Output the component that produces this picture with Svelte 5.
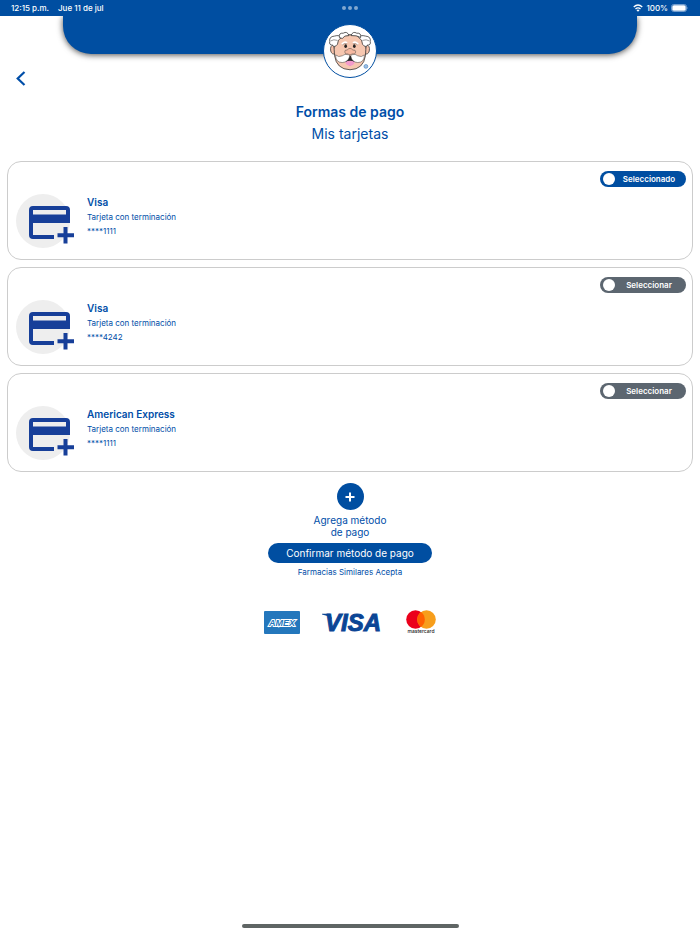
<script>
  let cards = [
    { id: 1, brand: 'Visa', ending: '1111' },
    { id: 2, brand: 'Visa', ending: '4242' },
    { id: 3, brand: 'American Express', ending: '1111' }
  ];

  let selectedCard = 1;

  function selectCard(id) {
    selectedCard = id;
  }
</script>

<div class="screen">
  <div class="status-bar">
    <div class="status-left">
      <span>12:15 p.m.</span>
      <span>Jue 11 de jul</span>
    </div>
    <div class="dots"><i></i><i></i><i></i></div>
    <div class="status-right">
      <svg width="10" height="8" viewBox="0 0 20 16" fill="none" stroke="#fff" stroke-width="2.8">
        <path d="M1.500 6 Q10 -2 18.500 6" />
        <path d="M5 10 Q10 5.500 15 10" />
        <path d="M10 15.500 L7 12.300 Q10 10 13 12.300 Z" fill="#fff" stroke="none" />
      </svg>
      <span>100%</span>
      <svg width="18" height="8" viewBox="0 0 18 8">
        <rect x="0.500" y="0.500" width="15" height="7" rx="2.200" fill="none" stroke="#8eb0d8" stroke-width="0.800" />
        <rect x="1.300" y="1.300" width="13.400" height="5.400" rx="1.500" fill="#fff" />
        <path d="M16.500 2.800 Q17.700 4 16.500 5.200 Z" fill="#8eb0d8" />
      </svg>
    </div>
  </div>

  <header>
    <div class="banner">
      <div class="logo">
        <svg viewBox="0 0 54 54" role="img" aria-label="Farmacias Similares">
          <g stroke="#333" stroke-width="0.800">
            <path d="M10 21 Q6 21 7 27 Q8 31 12 30 Z" fill="#f6c0a8" />
            <path d="M44 21 Q48 21 47 27 Q46 31 42 30 Z" fill="#f6c0a8" />
            <path d="M11 19 Q10 25 11 32 Q13 46 27 46.500 Q41 46 43 32 Q44 25 43 19 Q39 10 27 10 Q15 10 11 19 Z" fill="#f6c7b0" />
            <path d="M14 20 Q11 24 9 21 Q5 21 6 17 Q5 12 11 11.500 Q16 10 18 13 Q14 15 14 20 Z" fill="#fff" />
            <path d="M40 20 Q43 24 45 21 Q49 21 48 17 Q49 12 43 11.500 Q38 10 36 13 Q40 15 40 20 Z" fill="#fff" />
            <path d="M16 13 Q15 8 20 8.500 Q24 6 26 11 Q21 10.500 19 14 Z" fill="#fff" />
            <path d="M28 11 Q30 6 34 8.500 Q39 8 38 13 Q34 10.500 28 11 Z" fill="#fff" />
            <path d="M7 16.500 Q10 14.500 14 16 M40 16 Q44 14.500 47 16.500" fill="none" stroke-width="0.500" />
          </g>
          <path d="M18.500 20 Q21 16.500 24 18.500 M30 18.500 Q33 16.500 35.500 20" fill="none" stroke="#fff" stroke-width="1.600" />
          <path d="M19 20.800 Q21 18.500 24 19.500 M30 19.500 Q33 18.500 35 20.800" fill="none" stroke="#555" stroke-width="0.400" />
          <ellipse cx="22.500" cy="22" rx="1.400" ry="1.900" fill="#222" />
          <ellipse cx="31.500" cy="22" rx="1.400" ry="1.900" fill="#222" />
          <path d="M23 35 Q27 29 31 35 Q33 40 27 42 Q21 40 23 35 Z" fill="#222" />
          <path d="M22 38.500 Q27 36 32 38.500 Q31 42 27 42.500 Q23 42 22 38.500 Z" fill="#f39acb" />
          <path d="M26.500 31 Q21 29.500 19 32 Q15 34 12 31 Q12 39 19 39 Q25 38.500 26.500 33 Z" fill="#fff" stroke="#333" stroke-width="0.500" />
          <path d="M28 31 Q33 29.500 35 32 Q39 34 42 31 Q42 39 35 39 Q29 38.500 28 33 Z" fill="#fff" stroke="#333" stroke-width="0.500" />
          <path d="M21.500 28 Q21.500 25.500 24 26 Q27 22.500 30 26 Q33 25.500 33 28 Q32.500 31 29.500 30 Q27 32 24.500 30 Q22 31 21.500 28 Z" fill="#f6b8a0" stroke="#444" stroke-width="0.500" />
          <circle cx="43.500" cy="43" r="2" fill="#9fc0e2" stroke="#3d7cc0" stroke-width="0.600" />
        </svg>
      </div>
    </div>
  </header>

  <nav>
    <button class="back" aria-label="Regresar">
      <svg width="10" height="15" viewBox="0 0 10 15" fill="none" stroke="#004ea8" stroke-width="2.200">
        <path d="M8.500 1 L1.700 7.500 L8.500 14" />
      </svg>
    </button>
  </nav>

  <main>
    <h1>Formas de pago</h1>
    <h2>Mis tarjetas</h2>

    <ul class="cards">
      {#each cards as card (card.id)}
        <li class="card">
          <div class="card-icon">
            <svg width="46" height="39" viewBox="0 0 46 39">
              <path d="M4 0 H37 Q41 0 41 4 V17 H4 V29 H25 V33 H4 Q0 33 0 29 V4 Q0 0 4 0 Z M4 4 V8.500 H37 V4 Z" fill="#173f99" fill-rule="evenodd" />
              <path d="M36.500 21 V37.500 M28.500 29.300 H45" fill="none" stroke="#173f99" stroke-width="4" />
            </svg>
          </div>
          <div class="card-info">
            <h3>{card.brand}</h3>
            <p>Tarjeta con terminación</p>
            <p>****{card.ending}</p>
          </div>
          <button
            class="toggle"
            class:selected={selectedCard === card.id}
            aria-pressed={selectedCard === card.id}
            on:click={() => selectCard(card.id)}
          >
            <span class="knob"></span>
            <span class="toggle-text">{selectedCard === card.id ? 'Seleccionado' : 'Seleccionar'}</span>
          </button>
        </li>
      {/each}
    </ul>

    <button class="add">
      <span class="add-icon">
        <svg width="10" height="10" viewBox="0 0 10 10" stroke="#fff" stroke-width="2">
          <path d="M5 0.500 V9.500 M0.500 5 H9.500" />
        </svg>
      </span>
      <span>Agrega método<br />de pago</span>
    </button>

    <button class="confirm">Confirmar método de pago</button>
    <p class="accepts">Farmacias Similares Acepta</p>

    <div class="brands">
      <svg width="36" height="23" viewBox="0 0 36 23" role="img" aria-label="American Express">
        <rect width="36" height="23" rx="1" fill="#2477bc" />
        <text x="18" y="15" text-anchor="middle" class="amex">AMEX</text>
      </svg>
      <svg width="62" height="29" viewBox="0 -3 62 29" role="img" aria-label="Visa">
        <path d="M0 2.800 H8 L10 8 Q6 4.500 0 3.600 Z" fill="#0b4595" />
        <text x="3" y="20" class="visa">VISA</text>
      </svg>
      <svg width="30" height="25" viewBox="0 0 30 25" role="img" aria-label="Mastercard">
        <circle cx="9.500" cy="9.500" r="9.300" fill="#eb001b" />
        <circle cx="20.500" cy="9.500" r="9.300" fill="#f79e1b" />
        <path d="M15 2 A9.300 9.300 0 0 1 15 17 A9.300 9.300 0 0 1 15 2 Z" fill="#ff5f00" />
        <text x="15" y="23" text-anchor="middle" class="mastercard">mastercard</text>
      </svg>
    </div>
  </main>

  <div class="home-indicator"></div>
</div>

<style>
  :global(body) {
    background-color: #fff;
    font-family: Inter, "Liberation Sans", sans-serif;
    color: #004ea8;
  }

  .screen {
    min-height: 100vh;
    display: flex;
    flex-direction: column;
  }

  .status-bar {
    position: relative;
    z-index: 1;
    height: 16px;
    padding: 0 11px;
    display: grid;
    grid-template-columns: 1fr auto 1fr;
    align-items: center;
    background-color: #004ea1;
    color: #fff;
    font-size: 8px;
    font-weight: 500;
  }

  .status-left {
    display: flex;
    gap: 9px;
  }

  .status-right {
    display: flex;
    justify-content: flex-end;
    align-items: center;
    gap: 3px;
  }

  .dots {
    display: flex;
    gap: 2px;
  }

  .dots i {
    width: 4px;
    height: 4px;
    border-radius: 50%;
    background-color: #80a7d0;
  }

  header {
    padding: 0 9%;
  }

  .banner {
    position: relative;
    height: 38px;
    border-radius: 0 0 28px 28px;
    background-color: #004ea1;
    box-shadow: 0 1px 6px rgba(0, 0, 0, 0.7);
  }

  .logo {
    position: absolute;
    left: 50%;
    bottom: -24px;
    width: 54px;
    height: 54px;
    box-sizing: border-box;
    transform: translateX(-50%);
    border: 1px solid #004ea1;
    border-radius: 50%;
    background-color: #fff;
  }

  .logo svg {
    display: block;
  }

  button {
    padding: 0;
    border: none;
    background: none;
    color: inherit;
    font-family: inherit;
    cursor: pointer;
  }

  nav {
    display: flex;
    padding: 17px 16px 0;
  }

  .back svg {
    display: block;
  }

  main {
    display: flex;
    flex-direction: column;
    align-items: center;
    padding: 16px 7px 0;
  }

  h1, h2, h3, p {
    margin: 0;
  }

  h1 {
    font-size: 14px;
    font-weight: 600;
    line-height: 20px;
  }

  h2 {
    font-size: 14px;
    font-weight: 400;
    line-height: 24px;
  }

  .cards {
    align-self: stretch;
    display: flex;
    flex-direction: column;
    gap: 7px;
    margin: 15px 0 11px;
    padding: 0;
    list-style-type: none;
  }

  .card {
    display: flex;
    align-items: flex-start;
    min-height: 99px;
    box-sizing: border-box;
    padding: 9px 6px 0 8px;
    border: 1px solid #ccc;
    border-radius: 14px;
  }

  .card-icon {
    width: 54px;
    height: 54px;
    margin-top: 23px;
    border-radius: 50%;
    background-color: #eee;
  }

  .card-icon svg {
    display: block;
    margin: 12px 0 0 13px;
  }

  .card-info {
    flex: 1;
    padding: 23px 0 0 17px;
    font-size: 8px;
    line-height: 14px;
  }

  h3 {
    font-size: 10px;
    font-weight: 600;
    line-height: 16px;
  }

  .toggle {
    display: flex;
    align-items: center;
    width: 86px;
    height: 16px;
    padding: 0 3px;
    border-radius: 8px;
    background-color: #5c6670;
    color: #fff;
    font-size: 8px;
    font-weight: 600;
  }

  .toggle.selected {
    background-color: #004ea1;
  }

  .knob {
    width: 12px;
    height: 12px;
    border-radius: 50%;
    background-color: #fff;
  }

  .toggle-text {
    flex: 1;
  }

  .add {
    display: flex;
    flex-direction: column;
    align-items: center;
    gap: 4px;
    font-size: 10px;
    line-height: 12px;
  }

  .add-icon {
    display: flex;
    align-items: center;
    justify-content: center;
    width: 27px;
    height: 27px;
    border-radius: 50%;
    background-color: #004ea1;
  }

  .confirm {
    height: 20px;
    margin-top: 5px;
    padding: 0 18px;
    border-radius: 10px;
    background-color: #004ea1;
    color: #fff;
    font-size: 10px;
  }

  .accepts {
    margin-top: 2px;
    font-size: 8px;
    line-height: 14px;
  }

  .brands {
    display: flex;
    align-items: center;
    gap: 22px;
    margin-top: 29px;
  }

  .amex {
    font: italic bold 9px "Liberation Sans", sans-serif;
    fill: #2477bc;
    stroke: #fff;
    stroke-width: 2px;
    paint-order: stroke;
  }

  .visa {
    font: italic bold 24px "Liberation Sans", sans-serif;
    fill: #0b4595;
    stroke: #0b4595;
    stroke-width: 1px;
  }

  .mastercard {
    font: 500 5px Inter, sans-serif;
    fill: #222;
  }

  .home-indicator {
    width: 31%;
    height: 4px;
    margin: auto auto 6px;
    border-radius: 2px;
    background-color: #5f6564;
  }
</style>
